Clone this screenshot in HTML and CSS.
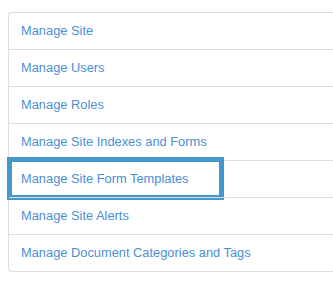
FILE: index.html
```html
<!DOCTYPE html>
<html lang="en">
<head>
  <meta charset="UTF-8" />
  <title>Site Administration</title>
  <link rel="stylesheet" href="styles.css">
</head>
<body>
  <div class="list-group">
    <a class="list-item" href="#">Manage Site</a>
    <a class="list-item" href="#">Manage Users</a>
    <a class="list-item" href="#">Manage Roles</a>
    <a class="list-item" href="#">Manage Site Indexes and Forms</a>
    <a class="list-item highlight" href="#">Manage Site Form Templates</a>
    <a class="list-item" href="#">Manage Site Alerts</a>
    <a class="list-item" href="#">Manage Document Categories and Tags</a>
  </div>
</body>
</html>
```

FILE: styles.css
```css
body {
  margin: 0;
  padding: 12px 0 0 8px;
  font-family: 'Liberation Sans', Arial, sans-serif;
  font-size: 12.85px;
  background: #fff;
  overflow: hidden;
}
.list-group {
  width: 340px;
  border: 1px solid #ddd;
  border-right: none;
  border-radius: 4px 0 0 4px;
}
.list-item {
  display: block;
  position: relative;
  padding: 8px 12px;
  line-height: 20px;
  color: #4a8fd6;
  text-decoration: none;
  border-top: 1px solid #ddd;
}
.list-item:first-child {
  border-top: none;
}
.highlight::after {
  content: "";
  position: absolute;
  left: -2px;
  top: -4px;
  width: 207px;
  height: 33px;
  border: 5px solid #4397cb;
}
```
